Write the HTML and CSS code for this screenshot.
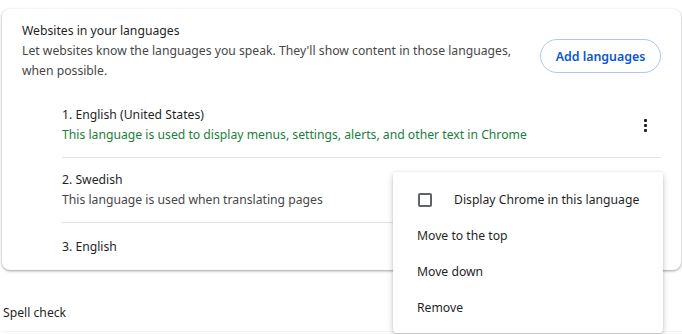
FILE: index.html
```html
<!DOCTYPE html>
<html lang="en">
<head>
    <meta charset="UTF-8">
    <meta name="viewport" content="width=device-width, initial-scale=1.0">
    <title>Languages - Settings</title>
    <link rel="stylesheet" href="styles.css">
</head>
<body>
    <div class="card">
        <div class="card-header">
            <div class="title">Websites in your languages</div>
            <div class="header-row">
                <div class="description">
                    Let websites know the languages you speak. They'll show content in those languages, when possible.
                </div>
                <button class="outline-button">Add languages</button>
            </div>
        </div>

        <div class="language-list">
            <div class="language-item">
                <div class="language-text">
                    <div>1. English (United States)</div>
                    <div class="note note-green">This language is used to display menus, settings, alerts, and other text in Chrome</div>
                </div>
                <button class="icon-button" aria-label="More actions">
                    <span class="dots"></span>
                </button>
            </div>
            <div class="language-item">
                <div class="language-text">
                    <div>2. Swedish</div>
                    <div class="note">This language is used when translating pages</div>
                </div>
                <button class="icon-button" aria-label="More actions">
                    <span class="dots"></span>
                </button>
            </div>
            <div class="language-item single">
                <div class="language-text">
                    <div>3. English</div>
                </div>
                <button class="icon-button" aria-label="More actions">
                    <span class="dots"></span>
                </button>
            </div>
        </div>
    </div>

    <div class="section-title">Spell check</div>

    <!-- Action menu opened for "2. Swedish" -->
    <div class="action-menu">
        <label class="menu-item">
            <span class="checkbox"></span>
            <span class="checkbox-label">Display Chrome in this language</span>
        </label>
        <div class="menu-item">Move to the top</div>
        <div class="menu-item">Move down</div>
        <div class="menu-item">Remove</div>
    </div>
</body>
</html>
```

FILE: styles.css
```css
* {
    margin: 0;
    padding: 0;
    box-sizing: border-box;
    font-family: "Noto Sans", Arial, sans-serif;
}

body {
    background-color: white;
    color: #1f1f1f;
    font-size: 12.2px;
    line-height: 20px;
    height: 334px;
    overflow: hidden;
    position: relative;
}

.card {
    margin: 9px 1px 0 2px;
    padding: 12px 20px 0 20px;
    background: white;
    border-radius: 8px;
    box-shadow: 0 1px 3px rgba(0, 0, 0, 0.3), 0 1px 2px rgba(0, 0, 0, 0.1);
}

.header-row {
    display: flex;
    align-items: flex-start;
    gap: 20px;
}

.description {
    flex: 1;
    color: #474747;
}

.outline-button {
    margin-top: -2px;
    width: 121px;
    height: 34px;
    background: white;
    color: #0b57d0;
    border: 1px solid #a8c7fa;
    border-radius: 17px;
    font-size: 12.4px;
    font-weight: 600;
    cursor: pointer;
}

.language-list {
    margin-top: 12px;
    padding-left: 40px;
}

.language-item {
    display: flex;
    align-items: center;
    min-height: 48px;
    padding: 12px 0;
    border-bottom: 1px solid #e3e3e3;
}

.language-item.single {
    padding: 0;
    min-height: 47px;
    border-bottom: none;
}

.language-text {
    flex: 1;
}

.note {
    color: #474747;
}

.note-green {
    color: #188038;
}

.icon-button {
    width: 32px;
    height: 32px;
    border: none;
    background: none;
    display: flex;
    align-items: center;
    justify-content: center;
    cursor: pointer;
}

.dots {
    width: 3px;
    height: 3px;
    border-radius: 1px;
    background: #1f1f1f;
    box-shadow: 0 -5px 0 #1f1f1f, 0 5px 0 #1f1f1f;
}

.section-title {
    margin: 33px 0 0 3px;
    padding-bottom: 8px;
    border-bottom: 1px solid #f3f3f3;
}

.action-menu {
    position: absolute;
    left: 393px;
    top: 172px;
    width: 270px;
    padding: 10px 0 7px;
    background: white;
    border-radius: 4px;
    box-shadow: 0 2px 6px rgba(0, 0, 0, 0.22), 0 1px 2px rgba(0, 0, 0, 0.12);
}

.menu-item {
    display: flex;
    align-items: center;
    height: 36px;
    padding: 0 24px;
    white-space: nowrap;
    cursor: pointer;
}

.checkbox {
    flex-shrink: 0;
    width: 14px;
    height: 14px;
    margin: 0 22px 0 1px;
    border: 2px solid #5f6368;
    border-radius: 2px;
}
```
